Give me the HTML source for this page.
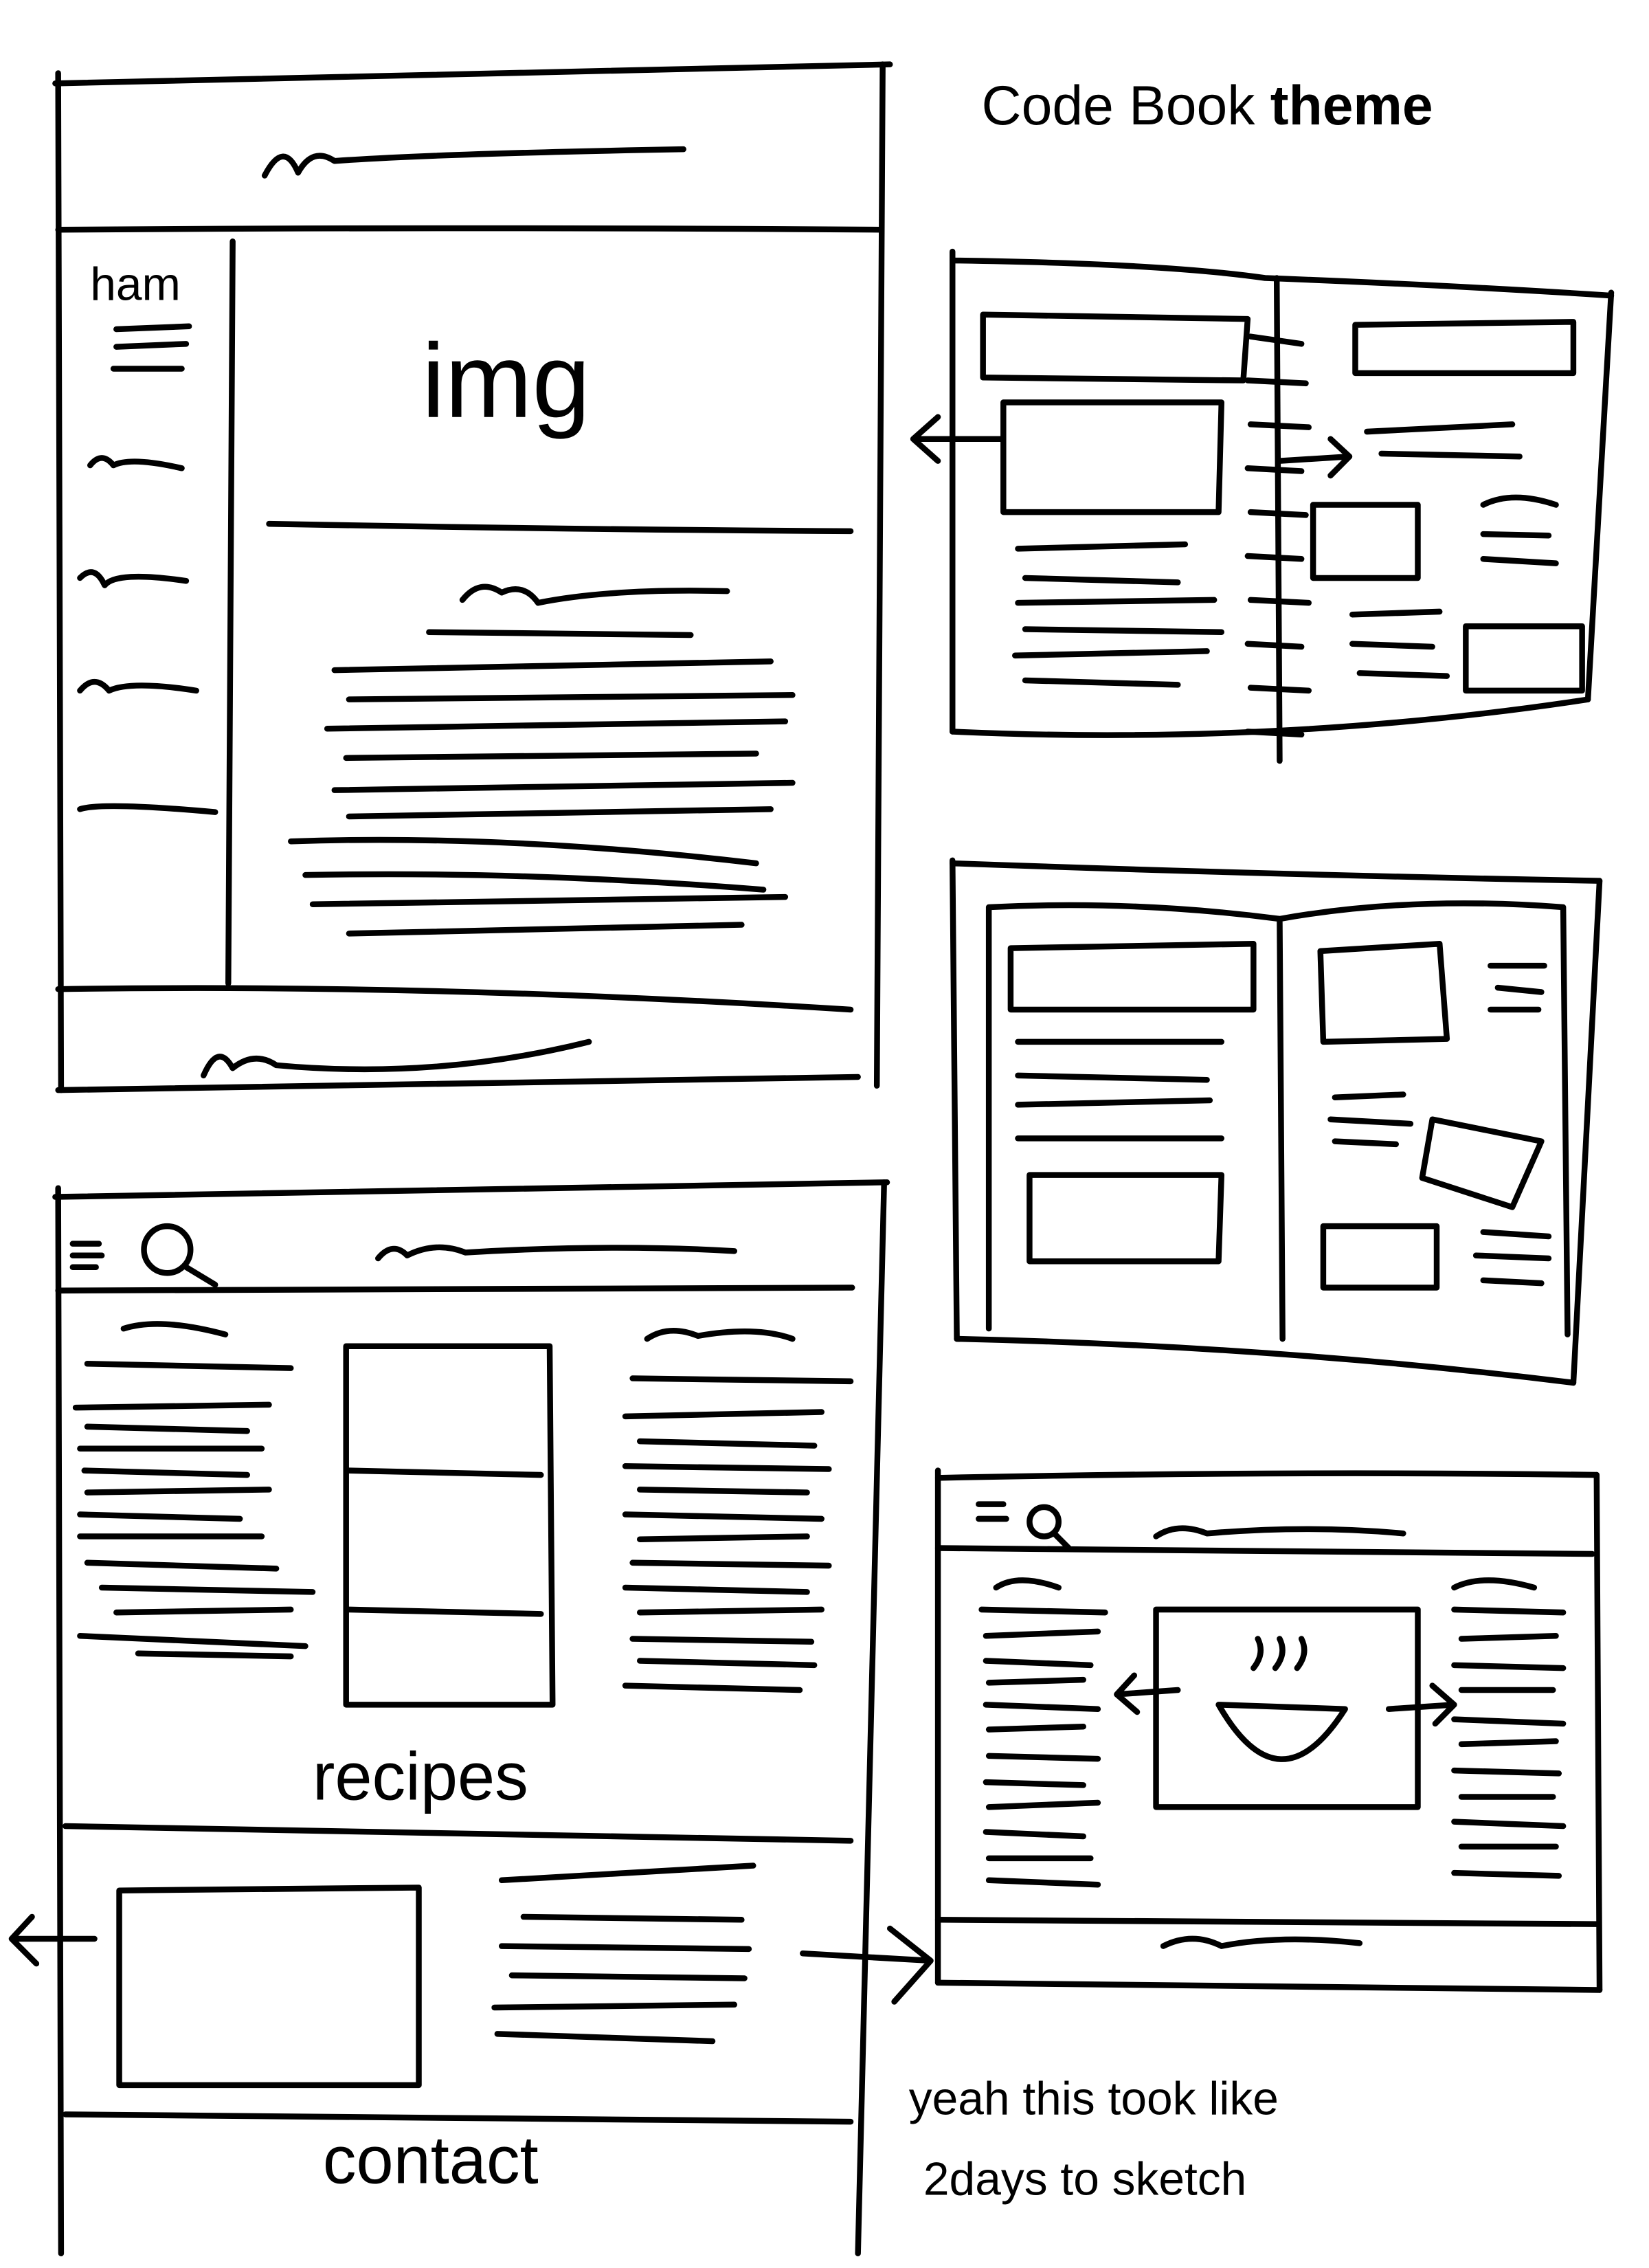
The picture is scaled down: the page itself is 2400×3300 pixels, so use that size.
<!DOCTYPE html>
<html><head><meta charset="utf-8"><style>
html,body{margin:0;padding:0;background:#fff;}
svg{display:block;}
text{font-family:"Liberation Sans",sans-serif;fill:#000;}
</style></head><body>
<svg width="2400" height="3300" viewBox="0 0 1134 1550" preserveAspectRatio="none" xmlns="http://www.w3.org/2000/svg">
<g fill="none" stroke="#000" stroke-width="4" stroke-linecap="round" stroke-linejoin="round">
<!-- Box 1 -->
<path d="M40 50 L42 745"/><path d="M38 57 Q300 52 612 44"/><path d="M607 44 L603 742"/>
<path d="M40 745 Q300 740 590 736"/><path d="M40 157 Q320 155 606 157"/>
<path d="M160 165 L157 672"/><path d="M40 676 Q300 672 585 690"/>
<path d="M185 358 Q400 362 585 363"/>
<path d="M182 120 Q195 95 205 118 Q215 100 230 110 Q300 105 470 102"/>
<path d="M80 225 L130 223 M80 237 L128 235 M78 252 L125 252"/>
<path d="M62 318 Q70 308 78 318 Q90 312 125 320"/>
<path d="M55 395 Q65 385 72 400 Q80 390 128 397"/>
<path d="M55 472 Q65 460 75 472 Q90 465 135 472"/>
<path d="M55 553 Q70 548 148 555"/>
<path d="M318 410 Q330 395 345 405 Q360 398 370 412 Q420 402 500 404"/><path d="M295 432 L475 434"/>
<path d="M230 458 L530 452 M240 478 L545 475 M225 498 L540 493 M238 518 L520 515 M230 540 L545 535 M240 558 L530 553 M200 575 Q350 570 520 590 M210 598 Q360 595 525 608 M215 618 L540 613 M240 638 L510 632"/>
<path d="M140 735 Q150 712 160 730 Q175 718 190 728 Q300 738 405 712"/>
<!-- Box 2 -->
<path d="M40 812 L42 1540"/><path d="M38 818 Q320 812 610 808"/><path d="M608 808 L590 1540"/>
<path d="M40 882 Q300 880 586 880"/>
<path d="M50 850 L68 850 M50 858 L70 858 M50 866 L66 866"/><circle cx="115" cy="854" r="16"/><path d="M128 866 L148 878"/>
<path d="M260 860 Q270 848 280 858 Q300 848 320 856 Q420 850 505 855"/>
<path d="M238 920 L238 1165 L380 1165 L378 920 Z"/><path d="M240 1005 L372 1008 M240 1100 L372 1103"/>
<path d="M85 908 Q110 900 155 912 M60 932 L200 935 M52 962 L185 960 M60 975 L170 978 M55 990 L180 990 M58 1005 L170 1008 M60 1020 L185 1018 M55 1035 L165 1038 M55 1050 L180 1050 M60 1068 L190 1072 M70 1085 L215 1088 M80 1102 L200 1100 M55 1118 L210 1125 M95 1130 L200 1132"/>
<path d="M445 915 Q460 905 480 913 Q520 906 545 915 M435 942 L585 944 M430 968 L565 965 M440 985 L560 988 M430 1002 L570 1004 M440 1018 L555 1020 M430 1035 L565 1038 M440 1052 L555 1050 M435 1068 L570 1070 M430 1085 L555 1088 M440 1102 L565 1100 M435 1120 L558 1122 M440 1135 L560 1138 M430 1152 L550 1155"/>
<path d="M45 1248 Q300 1252 585 1258"/>
<path d="M82 1292 L288 1290 L288 1425 L82 1425 Z"/>
<path d="M345 1285 L518 1275 M360 1310 L510 1312 M345 1330 L515 1332 M352 1350 L512 1352 M340 1372 L505 1370 M342 1390 L490 1395"/>
<path d="M45 1445 Q300 1448 585 1450"/>
<path d="M65 1325 L8 1325 M22 1310 L8 1325 L25 1342"/><path d="M552 1335 L640 1340 M612 1318 L640 1340 L615 1368"/>
<!-- Box 3 -->
<path d="M655 172 L655 500"/><path d="M655 178 Q800 180 870 190 Q1000 195 1108 202"/><path d="M1108 200 L1092 478"/><path d="M655 500 Q880 510 1092 478"/>
<path d="M878 190 L880 520"/>
<path d="M860 230 L895 235 M858 260 L898 262 M860 290 L900 292 M858 320 L895 322 M860 350 L898 352 M858 380 L895 382 M860 410 L900 412 M858 440 L895 442 M860 470 L900 472 M858 500 L895 502"/>
<path d="M676 215 L858 218 L855 260 L676 258 Z"/><path d="M932 222 L1082 220 L1082 255 L932 255 Z"/>
<path d="M690 275 L840 275 L838 350 L690 350 Z"/><path d="M903 345 L975 345 L975 395 L903 395 Z"/><path d="M1008 428 L1088 428 L1088 472 L1008 472 Z"/>
<path d="M700 375 L815 372 M705 395 L810 398 M700 412 L835 410 M705 430 L840 432 M698 448 L830 445 M705 465 L810 468"/>
<path d="M940 295 L1040 290 M950 310 L1045 312 M1020 345 Q1040 335 1070 345 M1020 365 L1065 366 M1020 382 L1070 385 M930 420 L990 418 M930 440 L985 442 M935 460 L995 462"/>
<path d="M690 300 L628 300 M645 285 L628 300 L645 315"/><path d="M880 315 L928 312 M915 300 L928 312 L915 325"/>
<!-- Box 4 -->
<path d="M655 588 L658 915"/><path d="M655 590 Q880 598 1100 602"/><path d="M1100 602 L1082 945"/><path d="M658 915 Q880 920 1082 945"/>
<path d="M680 620 L680 908 M680 620 Q780 615 880 628 L882 915 M880 628 Q970 612 1075 620 L1078 912"/>
<path d="M695 648 L862 645 L862 690 L695 690 Z"/><path d="M700 712 L840 712 M700 735 L830 738 M700 755 L832 752 M700 778 L840 778"/>
<path d="M708 803 L840 803 L838 862 L708 862 Z"/>
<path d="M908 650 L990 645 L995 710 L910 712 Z"/><path d="M985 765 L1060 780 L1040 825 L978 805 Z"/><path d="M910 838 L988 838 L988 880 L910 880 Z"/>
<path d="M1025 660 L1062 660 M1030 675 L1060 678 M1025 690 L1058 690 M918 750 L965 748 M915 765 L970 768 M918 780 L960 782 M1020 842 L1065 845 M1015 858 L1065 860 M1020 875 L1060 877"/>
<!-- Box 5 -->
<path d="M645 1005 L645 1355"/><path d="M645 1010 Q880 1005 1098 1008"/><path d="M1098 1008 L1100 1360"/><path d="M645 1355 L1100 1360"/>
<path d="M645 1058 Q880 1060 1095 1062"/><path d="M645 1312 L1098 1315"/>
<path d="M673 1028 L690 1028 M673 1038 L692 1038"/><circle cx="718" cy="1040" r="10"/><path d="M725 1048 L735 1058"/>
<path d="M795 1050 Q810 1040 830 1048 Q900 1042 965 1048"/>
<path d="M795 1100 L975 1100 L975 1235 L795 1235 Z"/>
<path d="M838 1165 Q880 1238 925 1168 Z"/><path d="M862 1140 Q870 1130 865 1120 M877 1140 Q885 1130 880 1120 M892 1140 Q900 1130 895 1120"/>
<path d="M810 1155 L768 1158 M780 1145 L768 1158 L782 1170"/><path d="M955 1168 L1000 1165 M985 1152 L1000 1165 L987 1178"/>
<path d="M685 1085 Q700 1075 728 1085 M675 1100 L760 1102 M678 1118 L755 1115 M678 1135 L750 1138 M680 1150 L745 1148 M678 1165 L755 1168 M680 1182 L745 1180 M680 1200 L755 1202 M678 1218 L745 1220 M680 1235 L755 1232 M678 1252 L745 1255 M680 1270 L750 1270 M680 1285 L755 1288"/>
<path d="M1000 1085 Q1020 1075 1055 1085 M1000 1100 L1075 1102 M1005 1120 L1070 1118 M1000 1138 L1075 1140 M1005 1155 L1068 1155 M1000 1175 L1075 1178 M1005 1192 L1070 1190 M1000 1210 L1072 1212 M1005 1228 L1068 1228 M1000 1245 L1075 1248 M1005 1262 L1070 1262 M1000 1280 L1072 1282"/>
<path d="M800 1330 Q820 1320 840 1330 Q880 1322 935 1328"/>
</g>
<text x="675" y="85" font-size="38">Code Book <tspan font-weight="bold">theme</tspan></text>
<text x="62" y="205" font-size="32">ham</text>
<text x="290" y="285" font-size="72">img</text>
<text x="215" y="1230" font-size="46">recipes</text>
<text x="222" y="1492" font-size="46">contact</text>
<text x="625" y="1445" font-size="32">yeah this took like</text>
<text x="635" y="1500" font-size="32">2days to sketch</text>
</svg>
</body></html>
